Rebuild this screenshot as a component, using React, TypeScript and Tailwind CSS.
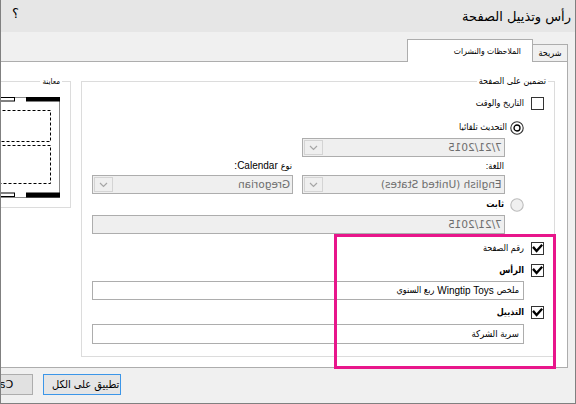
import type { ReactNode } from "react";

const Check = ({ checked }: { checked?: boolean }) => (
  <span className="w-[13px] h-[13px] shrink-0 border border-[#333333] bg-white flex items-center justify-center">
    {checked && (
      <svg width="11" height="11" viewBox="0 0 11 11">
        <path d="M1.8 4.8 L4.6 8 L9.4 2.6" fill="none" stroke="#000" strokeWidth="2.4" strokeLinecap="square" />
      </svg>
    )}
  </span>
);

const Radio = ({ selected, disabled }: { selected?: boolean; disabled?: boolean }) => (
  <svg width="14" height="14" viewBox="0 0 14 14" className="shrink-0">
    <circle
      cx="7"
      cy="7"
      r="6.2"
      fill={disabled ? "#f0f0f0" : "#fff"}
      stroke={disabled ? "#bcbcbc" : "#333"}
      strokeWidth="1.1"
    />
    {selected && <circle cx="7" cy="7" r="3" fill="none" stroke="#000" strokeWidth="1.3" />}
  </svg>
);

const Chevron = () => (
  <svg width="9" height="6" viewBox="0 0 9 6">
    <path d="M1 1 L4.5 4.5 L8 1" fill="none" stroke="#a6a6a6" strokeWidth="1.2" />
  </svg>
);

const Mirrored = ({ children }: { children: ReactNode }) => (
  <span className="inline-block -scale-x-100 whitespace-nowrap">{children}</span>
);

const Dropdown = ({ value, width }: { value?: string; width: string }) => (
  <div className={`${width} h-[19px] shrink-0 border border-[#adadad] bg-[#efefef] flex items-center justify-between`}>
    <span className="pr-[2px] text-[10.5px] leading-none text-[#6d6d6d] font-['DejaVu_Sans',sans-serif]">
      {value && <Mirrored>{value}</Mirrored>}
    </span>
    <span className="m-px w-[19px] h-[15px] border border-[#d4d4d4] flex items-center justify-center">
      <Chevron />
    </span>
  </div>
);

const CheckRow = ({ label, checked, bold, className = "" }: { label: string; checked?: boolean; bold?: boolean; className?: string }) => (
  <div className={`h-[13px] flex items-center gap-[7px] ${className}`}>
    <Check checked={checked} />
    <span className={`text-[9px] leading-none text-black whitespace-nowrap ${bold ? "font-bold" : ""}`}>{label}</span>
  </div>
);

export default function App() {
  return (
    <div
      dir="rtl"
      className="relative w-[576px] h-[404px] overflow-hidden bg-[#f0f0f0] border-l border-r border-b border-[#808080] flex flex-col font-['Liberation_Sans','DejaVu_Sans_Condensed','DejaVu_Sans',sans-serif] text-black"
    >
      {/* title bar */}
      <div className="h-[32px] shrink-0 bg-[#e6e6e6] flex items-center justify-between pr-[4px] pl-[11px]">
        <span className="text-[13px] leading-none font-['DejaVu_Sans',sans-serif]">رأس وتذييل الصفحة</span>
        <span className="text-[13px] leading-none -mt-[6px] font-['DejaVu_Sans',sans-serif]">؟</span>
      </div>

      {/* tabs */}
      <div className="h-[29px] shrink-0 flex items-end pr-[7px]">
        <div className="w-[35px] h-[17px] border-t border-r border-[#adadad] flex items-center justify-center text-[9px] leading-none">
          شريحة
        </div>
        <div className="relative z-10 -mb-px w-[126px] h-[23px] border-t border-l border-r border-[#adadad] bg-white flex items-center pr-[11px] text-[8.5px] leading-none">
          الملاحظات والنشرات
        </div>
      </div>

      {/* panel */}
      <div className="h-[307px] shrink-0 mr-[7px] bg-white border-t border-r border-b border-[#adadad] overflow-hidden flex items-start gap-[10px] pt-[13px] pr-[12px]">
        <fieldset className="w-[474px] h-[282px] shrink-0 border border-[#dcdcdc]">
          <legend className="ms-[6px] px-[2px] text-[9px] leading-[13px]">تضمين على الصفحة</legend>
          <div className="px-[10px] flex flex-col">
            <CheckRow label="التاريخ والوقت" className="mt-[9px]" />
            <div className="mt-[11px] h-[13px] pr-[20px] flex items-center gap-[3px]">
              <Radio selected />
              <span className="text-[9px] leading-none">التحديث تلقائيا</span>
            </div>
            <div className="mt-[4px] pr-[39px] flex">
              <Dropdown value="7/21/2015" width="w-[203px]" />
            </div>
            <div className="mt-[3px] h-[12px] pr-[39px] flex items-center gap-[9px] leading-none">
              <span className="w-[203px] pr-px text-[9px]">اللغة:</span>
              <span className="w-[201px] pr-px flex items-center gap-[3px]">
                <span className="text-[9px]">نوع</span>
                <span className="text-[10px]">Calendar:</span>
              </span>
            </div>
            <div className="mt-[3px] pr-[39px] flex gap-[9px]">
              <Dropdown value="English (United States)" width="w-[203px]" />
              <Dropdown value="Gregorian" width="w-[201px]" />
            </div>
            <div className="mt-[4px] h-[13px] pr-[20px] flex items-center gap-[6px]">
              <Radio disabled />
              <span className="text-[9px] leading-none font-bold">ثابت</span>
            </div>
            <div className="mt-[4px] pr-[39px] flex">
              <div className="w-[413px] h-[19px] border border-[#adadad] bg-[#efefef] flex items-center pr-[2px] text-[10.5px] leading-none text-[#6d6d6d] font-['DejaVu_Sans',sans-serif]">
                <Mirrored>7/21/2015</Mirrored>
              </div>
            </div>
            <CheckRow label="رقم الصفحة" checked className="mt-[8px]" />
            <CheckRow label="الرأس" checked bold className="mt-[9px]" />
            <div className="mt-[4px] pr-[20px] flex">
              <div className="w-[432px] h-[19px] border border-[#adadad] bg-white flex items-center gap-[3px] pr-[4px] leading-none whitespace-nowrap">
                <span className="text-[9px]">ملخص</span>
                <span dir="ltr" className="text-[10px]">Wingtip Toys</span>
                <span className="text-[9px]">ربع السنوي</span>
              </div>
            </div>
            <CheckRow label="التذييل" checked bold className="mt-[6px]" />
            <div className="mt-[5px] pr-[20px] flex">
              <div className="w-[432px] h-[20px] border border-[#adadad] bg-white flex items-center pr-[4px] text-[9.5px] leading-none">
                سرية الشركة
              </div>
            </div>
          </div>
        </fieldset>

        <fieldset className="w-[120px] h-[133px] shrink-0 border border-[#dcdcdc]">
          <legend className="ms-[8px] px-[2px] text-[8px] leading-[13px]">معاينة</legend>
          <div className="mt-[9px] pr-[10px] flex">
            <svg width="76" height="101" viewBox="0 0 76 101">
              <rect x="0.5" y="0.5" width="75" height="100" fill="#fff" stroke="#8a8a8a" />
              <rect x="0.5" y="0.5" width="30" height="3.5" fill="#fff" stroke="#000" />
              <rect x="42" y="0" width="34" height="4.5" fill="#000" />
              <rect x="0.5" y="96" width="30" height="3.5" fill="#fff" stroke="#000" />
              <rect x="42" y="95.5" width="34" height="5" fill="#000" />
              <rect x="8.5" y="13.5" width="58" height="31" fill="none" stroke="#000" strokeDasharray="3 2" />
              <rect x="8.5" y="48.5" width="58" height="38" fill="none" stroke="#000" strokeDasharray="3 2" />
            </svg>
          </div>
        </fieldset>
      </div>

      {/* buttons */}
      <div dir="ltr" className="flex-1 flex items-start pt-[6px]">
        <div className="-ml-[44px] w-[76px] h-[21px] shrink-0 border border-[#adadad] bg-[#e1e1e1] flex items-center justify-center text-[11px] leading-none font-['DejaVu_Sans',sans-serif]">
          <Mirrored>Cancel</Mirrored>
        </div>
        <div className="ml-[10px] w-[78px] h-[21px] shrink-0 border border-[#3c96e8] bg-[#e5e5e5] flex items-center justify-between pl-[8px] pr-[8px]">
          <span className="w-px h-[9px] bg-[#6fb6f2]" />
          <span dir="rtl" className="text-[11px] leading-none whitespace-nowrap">تطبيق على الكل</span>
        </div>
      </div>

      {/* highlight */}
      <div className="absolute left-[333px] top-[234px] w-[222px] h-[135px] border-[3px] border-[#e8168b] pointer-events-none" />
    </div>
  );
}
